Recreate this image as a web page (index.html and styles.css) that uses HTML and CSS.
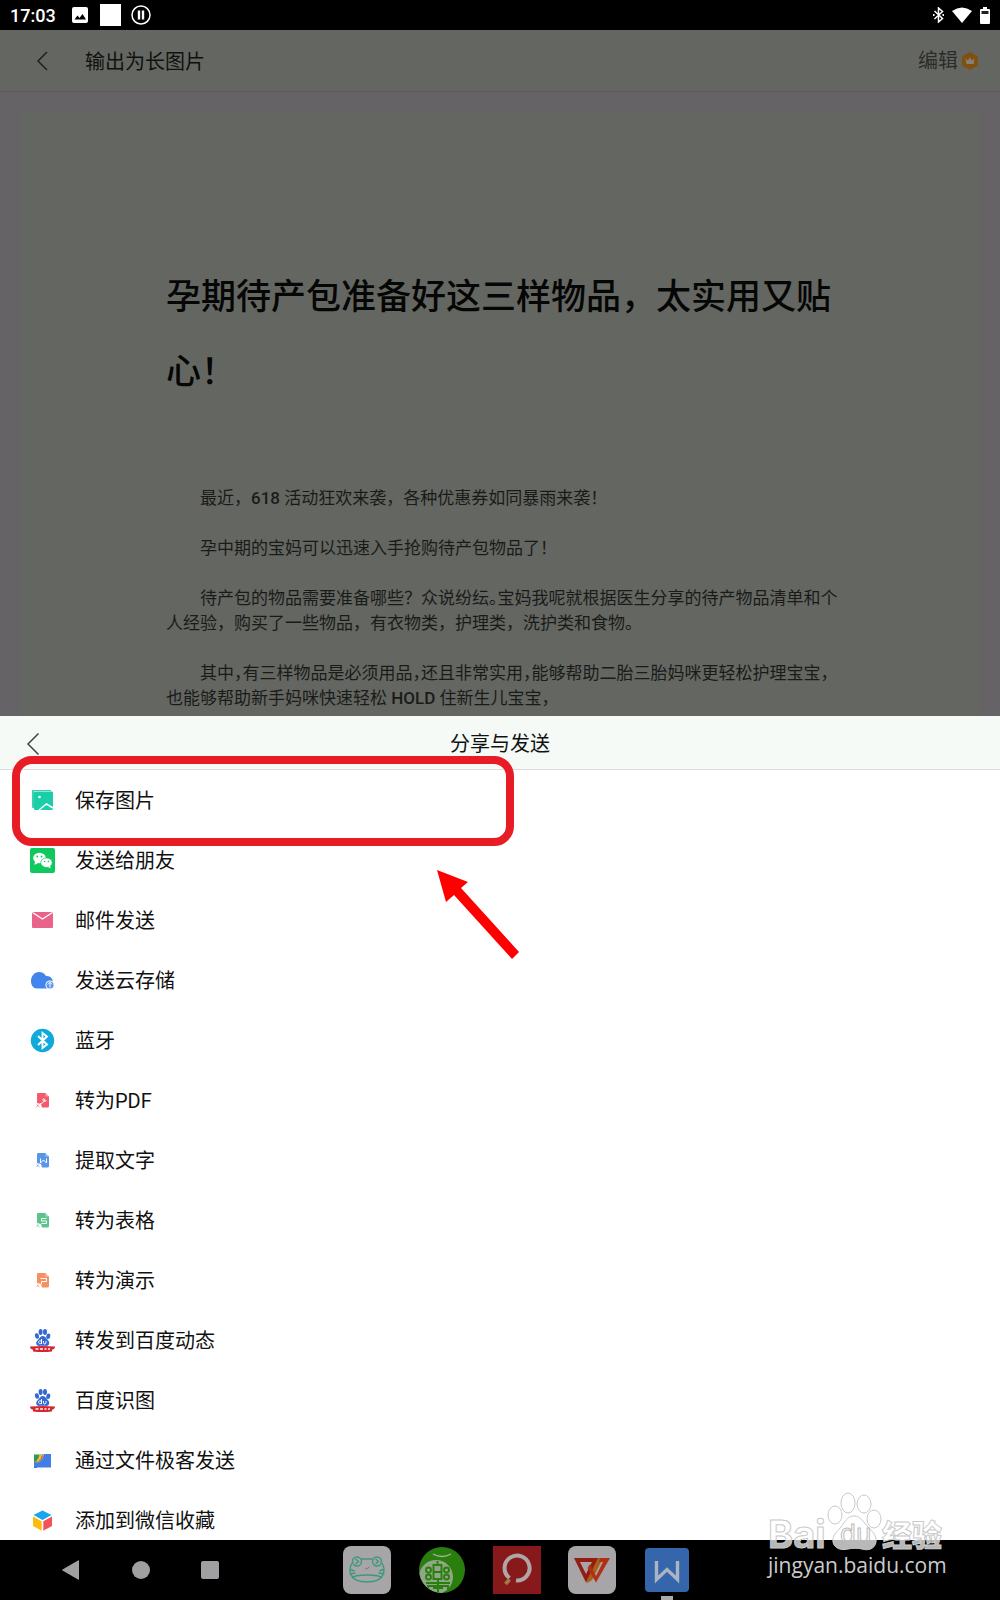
FILE: index.html
```html
<!DOCTYPE html>
<html lang="zh-CN">
<head>
  <meta charset="UTF-8">
  <meta name="viewport" content="width=device-width, initial-scale=1">
  <title>分享与发送</title>
  <link rel="stylesheet" href="styles.css">
</head>
<body>
  <!-- shared shapes -->
  <svg class="defs" aria-hidden="true">
    <symbol id="paw" viewBox="0 0 25 25">
      <g fill="#3568d4">
        <ellipse cx="7" cy="8" rx="2" ry="2.8" transform="rotate(-15 7 8)"/><ellipse cx="10.600" cy="4" rx="2" ry="3"/><ellipse cx="15" cy="4" rx="2" ry="3"/><ellipse cx="18.300" cy="8.300" rx="2" ry="2.800" transform="rotate(15 18.300 8.300)"/>
        <path d="M12.700 8c2 0 3 1.700 4.300 3.200 1.600 1.600 2.400 2.600 2.200 4.200-.3 2-2 2.800-4.200 2.400-1.600-.2-3-.2-4.600 0-2.200.4-4-.4-4.200-2.600-.1-1.600 1-2.600 2.400-4C10 9.700 10.700 8 12.700 8z"/>
      </g>
      <path d="M0 18.500q12.500-1 25 0c-.2 2-1 2.800-3 3.300v1.700q-9.500 1-19 0v-1.700C1 21.300.2 20.500 0 18.500z" fill="#d8262f"/>
      <path d="M5.500 21h3M10 21h3M14.500 21h2M18 21h2" stroke="#fff" stroke-width="2" fill="none" opacity=".75"/>
    </symbol>
    <symbol id="sheet-doc" viewBox="0 0 25 25">
      <path d="M8 5h7.500L19 8.500V18q0 1.500-1.500 1.500H12L11 16l-4-1V6q0-1 1-1z" fill="currentColor"/>
      <path d="M15.500 5v3.500H19z" fill="#fff" opacity=".45"/>
      <path d="M6.500 16.500l3 2.500M6.500 19l2-2.500" stroke="currentColor" stroke-width="1" fill="none" opacity=".65"/>
    </symbol>
  </svg>

  <header class="status">
    <span class="clock">17:03</span>
    <svg class="st-img" viewBox="0 0 16 16"><rect width="16" height="16" rx="2" fill="#fff"/><path d="M2.500 12.500l3-4 2 2.500 3-4 3.500 5.500z" fill="#000"/></svg>
    <span class="st-square"></span>
    <svg class="st-pause" viewBox="0 0 20 20"><circle cx="10" cy="10" r="9" fill="none" stroke="#fff" stroke-width="1.500"/><path d="M8 5.500v9M12 5.500v9" stroke="#fff" stroke-width="2.400"/></svg>
    <div class="st-right">
      <svg width="11" height="16" viewBox="0 0 11 16"><path d="M1.500 4l8 7.500-4 3.500V1l4 3.500-8 7.500" fill="none" stroke="#fff" stroke-width="1.500"/><path d="M0 7h1.500v2H0zM9.500 7H11v2H9.500z" fill="#fff"/></svg>
      <svg width="20" height="16" viewBox="0 0 20 16"><path d="M0 4Q10-3 20 4L10 16z" fill="#fff"/></svg>
      <svg width="10" height="17" viewBox="0 0 10 17"><path d="M3 0h4v2h2q1 0 1 1v13q0 1-1 1H1q-1 0-1-1V3q0-1 1-1h2z" fill="#fff"/><path d="M1.500 4h7v3h-7z" fill="#222"/></svg>
    </div>
  </header>

  <div class="topbar">
    <button class="icon-btn back" aria-label="返回"><svg width="12" height="20" viewBox="0 0 12 20"><path d="M11 1L2 10l9 9" fill="none" stroke="#20211f" stroke-width="1.500"/></svg></button>
    <h1>输出为长图片</h1>
    <button class="edit">编辑
      <svg width="16" height="18" viewBox="0 0 16 18"><path d="M8 0l8 4.500v9L8 18l-8-4.500v-9z" fill="#80500f"/><path d="M3.500 6.500L6 8.500l2-3 2 3 2.500-2-1 5.500h-7z" fill="#858079"/></svg>
    </button>
  </div>

  <main class="preview">
    <article class="doc">
      <h2>孕期待产包准备好这三样物品，太实用又贴<br>心！</h2>
      <p>最近，<span class="latin">618</span> 活动狂欢来袭，各种优惠券如同暴雨来袭！</p>
      <p>孕中期的宝妈可以迅速入手抢购待产包物品了！</p>
      <p>待产包的物品需要准备哪些？众说纷纭<span class="half">。</span>宝妈我呢就根据医生分享的待产物品清单和个<br>人经验，购买了一些物品，有衣物类，护理类，洗护类和食物。</p>
      <p>其中<span class="half">，</span>有三样物品是必须用品<span class="half">，</span>还且非常实用<span class="half">，</span>能够帮助二胎三胎妈咪更轻松护理宝宝<span class="half">，</span><br>也能够帮助新手妈咪快速轻松 <span class="latin">HOLD</span> 住新生儿宝宝，</p>
    </article>
  </main>

  <section class="sheet">
    <div class="sheet-head">
      <button class="icon-btn" aria-label="关闭"><svg width="14" height="24" viewBox="0 0 14 24"><path d="M12.500 1.500L2 12l10.500 10.500" fill="none" stroke="#444" stroke-width="1.500"/></svg></button>
      <h2>分享与发送</h2>
    </div>
    <ul class="actions">
      <li><button><svg viewBox="0 0 25 25"><path d="M2 3q0-1 1-1h18v1H4v17H3q-1 0-1-1z" fill="#3ccfb0"/><rect x="4" y="3.500" width="19" height="18.500" rx="1" fill="#19cfa9"/><circle cx="9.500" cy="9" r="1.300" fill="#fff"/><path d="M9 22l7.500-6L23 20" fill="none" stroke="#fff" stroke-width="1.600"/></svg>保存图片</button></li>
      <li><button><svg viewBox="0 0 25 25"><rect width="25" height="25" rx="2" fill="#10c95e"/><ellipse cx="9.500" cy="10" rx="6.300" ry="5.300" fill="#fff"/><path d="M5 13l-.5 4 3.500-2z" fill="#fff"/><ellipse cx="16.500" cy="14.700" rx="5.700" ry="4.800" fill="#fff" stroke="#10c95e" stroke-width=".7"/><path d="M18 19l2.500 1.500-.3-3z" fill="#fff"/><g fill="#10c95e"><circle cx="7.300" cy="8.500" r=".9"/><circle cx="11.500" cy="8.500" r=".9"/><circle cx="14.600" cy="13.500" r=".8"/><circle cx="18.400" cy="13.500" r=".8"/></g></svg>发送给朋友</button></li>
      <li><button><svg viewBox="0 0 25 25"><rect x="2" y="4" width="21" height="16" rx="1" fill="#e9638a"/><path d="M2.500 4.500l10 6.500 10-6.500" fill="none" stroke="#fff" stroke-width="1.300"/></svg>邮件发送</button></li>
      <li><button><svg viewBox="0 0 25 25"><path d="M7 20.500C3 20.500 1 17 1 13c0-5 3.500-9 8-9 3.200 0 5.500 1.500 7 4 4-.5 7 2.500 7 6.500v6z" fill="#4285ec"/><circle cx="20" cy="17" r="4.600" fill="#fff"/><circle cx="20" cy="17" r="3.600" fill="#5b96ef"/><path d="M20 19.500v-5M18 16.300l2-2 2 2" fill="none" stroke="#fff" stroke-width="1"/></svg>发送云存储</button></li>
      <li><button><svg viewBox="0 0 25 25"><circle cx="12.500" cy="12.500" r="11.700" fill="#10a9dc"/><path d="M8 8l9 8.500-4.500 3.500V5L17 8.500 8 17" fill="none" stroke="#fff" stroke-width="1.900"/></svg>蓝牙</button></li>
      <li><button><svg class="c-pdf" viewBox="0 0 25 25"><use href="#sheet-doc"/><path d="M10 16c3-1 5.500-3.500 4.500-5-1-1-2.500.5-1 2 1 1 2.500 0 3-1" fill="none" stroke="#fff" stroke-width="1"/></svg>转为PDF</button></li>
      <li><button><svg class="c-word" viewBox="0 0 25 25"><use href="#sheet-doc"/><path d="M10.500 10.500v4.500l3-3 3 3v-4.500" fill="none" stroke="#fff" stroke-width="1"/></svg>提取文字</button></li>
      <li><button><svg class="c-table" viewBox="0 0 25 25"><use href="#sheet-doc"/><path d="M16.500 10.500h-5v2.500h5v2.500h-5" fill="none" stroke="#fff" stroke-width="1"/></svg>转为表格</button></li>
      <li><button><svg class="c-slide" viewBox="0 0 25 25"><use href="#sheet-doc"/><path d="M10.500 10.500h6v3h-5v2.500" fill="none" stroke="#fff" stroke-width="1"/></svg>转为演示</button></li>
      <li><button><svg viewBox="0 0 25 25"><use href="#paw"/><path d="M11.500 11v5M11.500 14a1.500 1.500 0 1 0 0 .5M13.500 13v1.500q0 1.500 1.200 1.500t1.300-1.500V13" fill="none" stroke="#fff" stroke-width="1"/></svg>转发到百度动态</button></li>
      <li><button><svg viewBox="0 0 25 25"><use href="#paw"/><path d="M11.500 11v5M11.500 14a1.500 1.500 0 1 0 0 .5M13.500 13v1.500q0 1.500 1.200 1.500t1.300-1.500V13" fill="none" stroke="#fff" stroke-width="1"/></svg>百度识图</button></li>
      <li><button><svg viewBox="0 0 25 25"><path d="M4 8h3v12H4z" fill="#3270d8"/><path d="M4 6.500h9L4 15z" fill="#2c9c52"/><path d="M13 5.500V8c0 4-3.500 6.500-9 6.500 4-2 5-5 5-7.500 1 .5 3-.5 4-1.500z" fill="#f6c026"/><path d="M13 6.500c0 5-4 8-9 8 5-1 7-3 7.500-6z" fill="#dd4b3e"/><path d="M13.500 6H21v13.500H4V15c5.500 0 9.500-3.500 9.500-9z" fill="#437ee6"/></svg>通过文件极客发送</button></li>
      <li><button><svg viewBox="0 0 25 25"><path d="M12.500 2.500l9 4.500-9 5-9-5z" fill="#1ba5ef"/><path d="M3 8.500l8.700 4.800v9.500L3 18z" fill="#fcbc0e"/><path d="M22 8.500l-8.700 4.800v9.500L22 18z" fill="#f25358"/></svg>添加到微信收藏</button></li>
    </ul>

    <div class="mark-box"></div>
    <svg class="mark-arrow" viewBox="0 0 84 92"><path d="M1 1l31 12-7 6 58 64-7 7-58-64-8 7z" fill="#f00"/></svg>
  </section>

  <nav class="navbar">
    <div class="sys">
      <button class="icon-btn" aria-label="后退"><svg width="20" height="20" viewBox="0 0 20 20"><path d="M17 0.500Q18 0 18 1v18q0 1-1 .5L1.500 10.500q-.8-.5 0-1z" fill="#a09fa1"/></svg></button>
      <button class="icon-btn" aria-label="主屏幕"><svg width="20" height="20" viewBox="0 0 20 20"><circle cx="10" cy="10" r="9" fill="#a09fa1"/></svg></button>
      <button class="icon-btn" aria-label="最近"><svg width="20" height="20" viewBox="0 0 20 20"><rect x="0" y="1" width="18" height="18" rx="2" fill="#a09fa1"/></svg></button>
    </div>
    <div class="apps">
      <button class="icon-btn" aria-label="青蛙"><svg viewBox="0 0 48 48"><rect width="48" height="48" rx="8" fill="#a8a5a9"/><g fill="none" stroke="#3c9a7a" stroke-width="1.400"><circle cx="14" cy="15.500" r="4.500"/><circle cx="34" cy="15.500" r="4.500"/><path d="M12.500 13l3 2.500-3 2.500M32.500 13l3 2.500-3 2.500M18.500 13h11M9 17c-4 7-3 19 15 19s19-12 15-19M9 32c3-4 27-4 30 0M6.500 23l5 2M6.500 28l6-1M41.500 23l-5 2M41.500 28l-6-1"/><path d="M22 22l1.500 1 3-2" stroke="#777" stroke-width="1"/></g></svg></button>
      <button class="icon-btn" aria-label="音乐"><svg viewBox="0 0 48 48"><clipPath id="disc"><circle cx="24" cy="24" r="23"/></clipPath><circle cx="24" cy="24" r="23" fill="#2a7e0d"/><circle cx="18" cy="31" r="17" fill="#8fa786" clip-path="url(#disc)"/><g fill="none" stroke="#2a7e0d" stroke-width="1.900" clip-path="url(#disc)"><rect x="15.500" y="19" width="8" height="14"/><path d="M15.500 26h8M19.500 15v4M8 37h24M20 33v15M10 48v-8h20v8M15 42h10"/><circle cx="10.500" cy="24" r="2.500"/><circle cx="10.500" cy="31" r="2.500"/><circle cx="28.500" cy="24" r="2.500"/><circle cx="28.500" cy="31" r="2.500"/></g><path d="M15 8q9 5 18 0" fill="none" stroke="#9db494" stroke-width="1.400"/></svg></button>
      <button class="icon-btn" aria-label="搜索"><svg viewBox="0 0 48 48"><rect width="48" height="48" fill="#87191b"/><path d="M16.500 32A12.500 12.500 0 1 1 23 34.500" fill="none" stroke="#b0a4a6" stroke-width="4"/><path d="M16.500 33.500l-4 4.500" stroke="#a07848" stroke-width="4"/></svg></button>
      <button class="icon-btn" aria-label="办公"><svg viewBox="0 0 48 48"><rect width="48" height="48" rx="8" fill="#a8a5a9"/><path d="M6 12h24l-2 4H12l6 12 8-16h5L18 36.500z" fill="#941c12"/><path d="M18 36.500L30 12h5L24 34l-4 2.500z" fill="#a96018"/><path d="M22 18l6 12 7-14h-4l1-4h10L28 36.500 19.500 22z" fill="#b03014"/></svg></button>
      <button class="icon-btn current" aria-label="文字"><svg viewBox="0 0 48 48"><rect x="2" y="2" width="44" height="44" rx="4" fill="#3565aa"/><path d="M13.500 15v18.500L24 23.500l10.500 10V15" fill="none" stroke="#aab4c4" stroke-width="3.400"/></svg></button>
    </div>
  </nav>

  <div class="watermark">
    <svg width="180" height="64" viewBox="0 0 180 64">
      <g class="wm-ink">
        <text class="wm-bai" x="0" y="62">Bai</text>
        <ellipse cx="67" cy="29" rx="7" ry="9"/><ellipse cx="80" cy="17" rx="7" ry="10"/><ellipse cx="96" cy="18" rx="7" ry="9"/><ellipse cx="106" cy="33" rx="7" ry="9"/>
        <path d="M86 30c7 0 9 6 14 11 5 5 9 9 8 15-1 7-8 9-14 7-5-1-9-1-14 0-7 2-14-1-15-7-1-7 4-10 8-15 4-5 6-11 13-11z"/>
        <text class="wm-cn" x="114" y="60">经验</text>
      </g>
      <text class="wm-du" x="72" y="57">du</text>
    </svg>
    <span>jingyan.baidu.com</span>
  </div>
</body>
</html>
```
FILE: styles.css
```css
:root { --ui: Roboto, "Noto Sans CJK SC", sans-serif; --dim: #646662; --red: #e81c25; }
* { box-sizing: border-box; }
body { margin: 0; height: 100vh; position: relative; display: flex; flex-direction: column; overflow: hidden; background: #656366; font-family: var(--ui); font-size: 20px; }
h1, h2, p, ul { margin: 0; padding: 0; font-weight: 400; }
ul { list-style: none; }
svg { display: block; flex: none; }
button { border: none; background: none; padding: 0; font: inherit; color: inherit; cursor: pointer; }
.defs { position: absolute; width: 0; height: 0; }
.icon-btn { display: flex; align-items: center; justify-content: center; }

.status { flex: none; height: 30px; padding: 0 10px; display: flex; align-items: center; background: #000; color: #fff; }
.clock { font-size: 18px; font-weight: 500; width: 62px; }
.st-img { width: 16px; height: 16px; margin-right: 12px; }
.st-square { width: 21px; height: 22px; margin-right: 10px; background: #fff; }
.st-pause { width: 20px; height: 20px; }
.st-right { margin-left: auto; display: flex; align-items: center; gap: 8px; }

.topbar { flex: none; height: 62px; padding: 0 22px 0 36px; display: flex; align-items: center; background: var(--dim); border-bottom: 1px solid #5d5e5c; color: #10110f; }
.topbar h1 { font-size: 20px; line-height: 30px; margin-left: 37px; padding-top: 2px; }
.edit { margin-left: auto; display: flex; align-items: center; gap: 4px; line-height: 30px; color: #2b2c2a; }

.preview { flex: 1; min-height: 0; padding: 20px 20px 0; overflow: hidden; }
.doc { min-height: 100%; padding: 148px 146px 0; background: var(--dim); color: #1a1b19; white-space: nowrap; }
.doc h2 { font-size: 35px; font-weight: 500; line-height: 75px; margin-bottom: 76px; color: #050605; }
.doc p { font-size: 17px; line-height: 25px; text-indent: 2em; margin-bottom: 25px; }
.doc .latin { font-weight: 500; }
.doc .half { font-feature-settings: "halt"; }

.sheet { position: relative; flex: none; background: #fff; color: #111; }
.sheet-head { display: grid; grid-template-columns: 14px 1fr 14px; align-items: center; height: 54px; padding: 2px 26px 0; background: #f5faf7; border-bottom: 1px solid #dadddb; }
.sheet-head h2 { font-size: 20px; line-height: 30px; text-align: center; }
.actions button { display: flex; align-items: center; gap: 20px; width: 100%; height: 60px; padding: 1px 0 0 30px; text-align: left; line-height: 30px; }
.actions li:last-child { height: 50px; overflow: hidden; }
.actions svg { width: 25px; height: 25px; }
.c-pdf { color: #f15b6c; }
.c-word { color: #5b95e6; }
.c-table { color: #5bc48d; }
.c-slide { color: #f59061; }

.mark-box { position: absolute; left: 12px; top: 40px; width: 502px; height: 90px; border: 8px solid var(--red); border-radius: 20px; }
.mark-arrow { position: absolute; left: 436px; top: 153px; width: 84px; height: 92px; }

.navbar { flex: none; height: 60px; padding-left: 61px; display: flex; align-items: center; background: #000; }
.sys { display: flex; gap: 50px; }
.apps { margin-left: 122px; display: flex; gap: 27px; }
.apps .icon-btn { position: relative; width: 48px; height: 48px; }
.apps svg { width: 48px; height: 48px; }
.current::after { content: ""; position: absolute; left: 18px; bottom: -6px; width: 12px; height: 4px; background: #aaa; }

.watermark { position: absolute; right: 52px; bottom: 20px; width: 180px; pointer-events: none; color: #ccc; }
.watermark svg { overflow: visible; }
.watermark span { display: block; font: 21px/30px "Open Sans", sans-serif; }
.wm-ink { fill: rgba(255, 255, 255, .72); stroke: #c9c9c9; stroke-width: 1; }
.wm-bai { font: 700 38px Inter, sans-serif; }
.wm-cn { font: 900 30px "Noto Sans CJK SC", sans-serif; }
.wm-du { font: 26px Inter, sans-serif; fill: none; stroke: #bbb; stroke-width: 1; }
```
